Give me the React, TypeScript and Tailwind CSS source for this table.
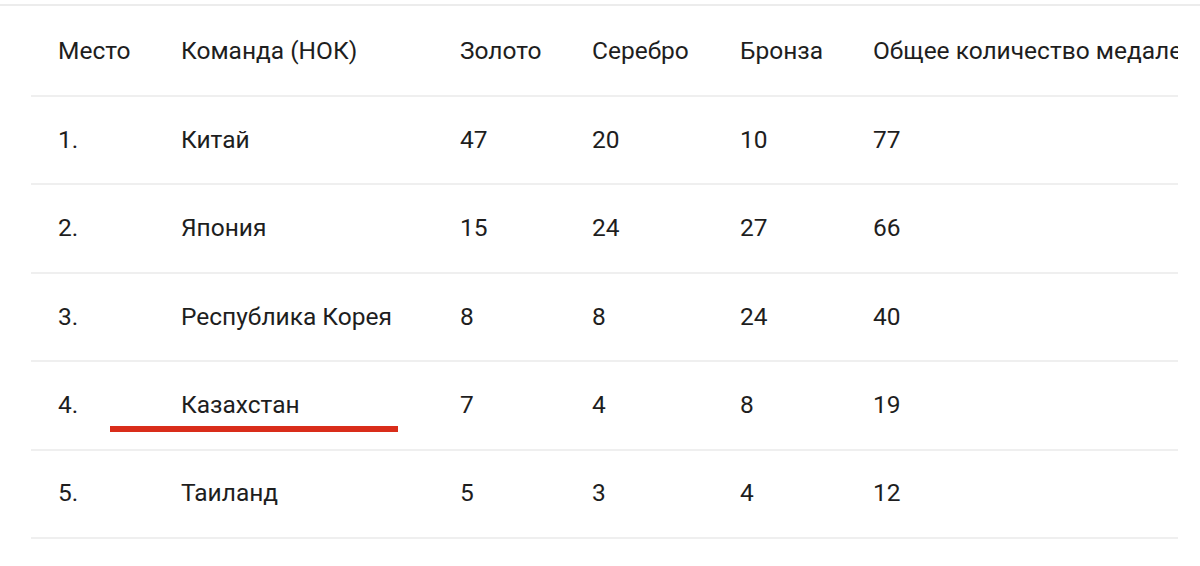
import React from "react";

const rows = [
  { place: "1.", team: "Китай", gold: 47, silver: 20, bronze: 10, total: 77 },
  { place: "2.", team: "Япония", gold: 15, silver: 24, bronze: 27, total: 66 },
  { place: "3.", team: "Республика Корея", gold: 8, silver: 8, bronze: 24, total: 40 },
  { place: "4.", team: "Казахстан", gold: 7, silver: 4, bronze: 8, total: 19, mark: true },
  { place: "5.", team: "Таиланд", gold: 5, silver: 3, bronze: 4, total: 12 },
];

const cols = "grid grid-cols-[123px_279px_132px_148px_133px_1fr] items-center";

export default function App() {
  return (
    <div className="w-[1200px] h-[566px] bg-white overflow-hidden font-['Roboto',sans-serif] text-[24.5px] text-[#1e1e1e]">
      <div className="mt-1 h-[2px] w-full bg-[#ececec]" />
      <div className="ml-[31px] w-[1147px] overflow-hidden">
        <div className={`${cols} h-[91px] pt-[2px] border-b-2 border-[#efefef] whitespace-nowrap`}>
          <div className="pl-[27px]">Место</div>
          <div className="pl-[27px]">Команда (НОК)</div>
          <div className="pl-[27px]">Золото</div>
          <div className="pl-[27px]">Серебро</div>
          <div className="pl-[27px]">Бронза</div>
          <div className="pl-[27px]">Общее количество медалей</div>
        </div>
        {rows.map((r) => (
          <div
            key={r.place}
            className={`${cols} relative h-[88.4px] border-b-2 border-[#efefef] whitespace-nowrap`}
          >
            <div className="pl-[27px]">{r.place}</div>
            <div className="pl-[27px]">{r.team}</div>
            <div className="pl-[27px]">{r.gold}</div>
            <div className="pl-[27px]">{r.silver}</div>
            <div className="pl-[27px]">{r.bronze}</div>
            <div className="pl-[27px]">{r.total}</div>
            {r.mark && (
              <div className="absolute left-[79px] top-[64px] h-[6px] w-[288px] bg-[#d92d1a]" />
            )}
          </div>
        ))}
      </div>
    </div>
  );
}
